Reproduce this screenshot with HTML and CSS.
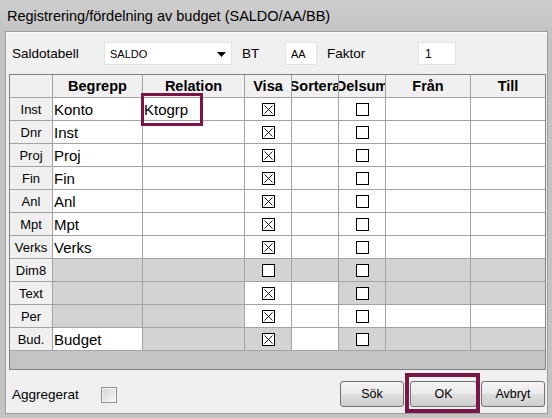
FILE: index.html
```html
<!DOCTYPE html>
<html>
<head>
<meta charset="utf-8">
<link rel="stylesheet" href="styles.css">
</head>
<body>
<div class="window">
  <div class="titlebar">Registrering/fördelning av budget (SALDO/AA/BB)</div>
  <div class="panel">
    <div class="toolbar">
      <span class="lbl lbl-saldo">Saldotabell</span>
      <div class="combo"><span>SALDO</span><svg class="arrow" width="9" height="5" viewBox="0 0 9 5"><path d="M0 0H9L4.5 5Z" fill="#000"/></svg></div>
      <span class="lbl lbl-bt">BT</span>
      <div class="field field-aa">AA</div>
      <span class="lbl lbl-faktor">Faktor</span>
      <div class="field field-1">1</div>
    </div>

    <div class="grid">
      <div class="hd"></div>
      <div class="hd"><span>Begrepp</span></div>
      <div class="hd"><span>Relation</span></div>
      <div class="hd"><span>Visa</span></div>
      <div class="hd"><span>Sortera</span></div>
      <div class="hd"><span>Delsum</span></div>
      <div class="hd"><span>Från</span></div>
      <div class="hd"><span>Till</span></div>

      <div class="rh">Inst</div><div class="c txt">Konto</div><div class="c txt">Ktogrp</div><div class="c ck"><svg class="cb" width="13" height="13" viewBox="0 0 13 13"><rect x=".5" y=".5" width="12" height="12" fill="#fff" stroke="#000"/><path d="M2.5 2.5L10.5 10.5M10.5 2.5L2.5 10.5" stroke="#000" stroke-width=".9"/></svg></div><div class="c"></div><div class="c ck"><svg class="cb" width="13" height="13" viewBox="0 0 13 13"><rect x=".5" y=".5" width="12" height="12" fill="#fff" stroke="#000"/></svg></div><div class="c"></div><div class="c"></div>

      <div class="rh">Dnr</div><div class="c txt">Inst</div><div class="c txt"></div><div class="c ck"><svg class="cb" width="13" height="13" viewBox="0 0 13 13"><rect x=".5" y=".5" width="12" height="12" fill="#fff" stroke="#000"/><path d="M2.5 2.5L10.5 10.5M10.5 2.5L2.5 10.5" stroke="#000" stroke-width=".9"/></svg></div><div class="c"></div><div class="c ck"><svg class="cb" width="13" height="13" viewBox="0 0 13 13"><rect x=".5" y=".5" width="12" height="12" fill="#fff" stroke="#000"/></svg></div><div class="c"></div><div class="c"></div>

      <div class="rh">Proj</div><div class="c txt">Proj</div><div class="c txt"></div><div class="c ck"><svg class="cb" width="13" height="13" viewBox="0 0 13 13"><rect x=".5" y=".5" width="12" height="12" fill="#fff" stroke="#000"/><path d="M2.5 2.5L10.5 10.5M10.5 2.5L2.5 10.5" stroke="#000" stroke-width=".9"/></svg></div><div class="c"></div><div class="c ck"><svg class="cb" width="13" height="13" viewBox="0 0 13 13"><rect x=".5" y=".5" width="12" height="12" fill="#fff" stroke="#000"/></svg></div><div class="c"></div><div class="c"></div>

      <div class="rh">Fin</div><div class="c txt">Fin</div><div class="c txt"></div><div class="c ck"><svg class="cb" width="13" height="13" viewBox="0 0 13 13"><rect x=".5" y=".5" width="12" height="12" fill="#fff" stroke="#000"/><path d="M2.5 2.5L10.5 10.5M10.5 2.5L2.5 10.5" stroke="#000" stroke-width=".9"/></svg></div><div class="c"></div><div class="c ck"><svg class="cb" width="13" height="13" viewBox="0 0 13 13"><rect x=".5" y=".5" width="12" height="12" fill="#fff" stroke="#000"/></svg></div><div class="c"></div><div class="c"></div>

      <div class="rh">Anl</div><div class="c txt">Anl</div><div class="c txt"></div><div class="c ck"><svg class="cb" width="13" height="13" viewBox="0 0 13 13"><rect x=".5" y=".5" width="12" height="12" fill="#fff" stroke="#000"/><path d="M2.5 2.5L10.5 10.5M10.5 2.5L2.5 10.5" stroke="#000" stroke-width=".9"/></svg></div><div class="c"></div><div class="c ck"><svg class="cb" width="13" height="13" viewBox="0 0 13 13"><rect x=".5" y=".5" width="12" height="12" fill="#fff" stroke="#000"/></svg></div><div class="c"></div><div class="c"></div>

      <div class="rh">Mpt</div><div class="c txt">Mpt</div><div class="c txt"></div><div class="c ck"><svg class="cb" width="13" height="13" viewBox="0 0 13 13"><rect x=".5" y=".5" width="12" height="12" fill="#fff" stroke="#000"/><path d="M2.5 2.5L10.5 10.5M10.5 2.5L2.5 10.5" stroke="#000" stroke-width=".9"/></svg></div><div class="c"></div><div class="c ck"><svg class="cb" width="13" height="13" viewBox="0 0 13 13"><rect x=".5" y=".5" width="12" height="12" fill="#fff" stroke="#000"/></svg></div><div class="c"></div><div class="c"></div>

      <div class="rh">Verks</div><div class="c txt">Verks</div><div class="c txt"></div><div class="c ck"><svg class="cb" width="13" height="13" viewBox="0 0 13 13"><rect x=".5" y=".5" width="12" height="12" fill="#fff" stroke="#000"/><path d="M2.5 2.5L10.5 10.5M10.5 2.5L2.5 10.5" stroke="#000" stroke-width=".9"/></svg></div><div class="c"></div><div class="c ck"><svg class="cb" width="13" height="13" viewBox="0 0 13 13"><rect x=".5" y=".5" width="12" height="12" fill="#fff" stroke="#000"/></svg></div><div class="c"></div><div class="c"></div>

      <div class="rh">Dim8</div><div class="g"></div><div class="g"></div><div class="g ck"><svg class="cb" width="13" height="13" viewBox="0 0 13 13"><rect x=".5" y=".5" width="12" height="12" fill="#fff" stroke="#000"/></svg></div><div class="g"></div><div class="g ck"><svg class="cb" width="13" height="13" viewBox="0 0 13 13"><rect x=".5" y=".5" width="12" height="12" fill="#fff" stroke="#000"/></svg></div><div class="g"></div><div class="g"></div>

      <div class="rh">Text</div><div class="g"></div><div class="g"></div><div class="c ck"><svg class="cb" width="13" height="13" viewBox="0 0 13 13"><rect x=".5" y=".5" width="12" height="12" fill="#fff" stroke="#000"/><path d="M2.5 2.5L10.5 10.5M10.5 2.5L2.5 10.5" stroke="#000" stroke-width=".9"/></svg></div><div class="c"></div><div class="g ck"><svg class="cb" width="13" height="13" viewBox="0 0 13 13"><rect x=".5" y=".5" width="12" height="12" fill="#fff" stroke="#000"/></svg></div><div class="g"></div><div class="g"></div>

      <div class="rh">Per</div><div class="g"></div><div class="g"></div><div class="c ck"><svg class="cb" width="13" height="13" viewBox="0 0 13 13"><rect x=".5" y=".5" width="12" height="12" fill="#fff" stroke="#000"/><path d="M2.5 2.5L10.5 10.5M10.5 2.5L2.5 10.5" stroke="#000" stroke-width=".9"/></svg></div><div class="c"></div><div class="c ck"><svg class="cb" width="13" height="13" viewBox="0 0 13 13"><rect x=".5" y=".5" width="12" height="12" fill="#fff" stroke="#000"/></svg></div><div class="c"></div><div class="c"></div>

      <div class="rh">Bud.</div><div class="c txt">Budget</div><div class="g"></div><div class="g ck"><svg class="cb" width="13" height="13" viewBox="0 0 13 13"><rect x=".5" y=".5" width="12" height="12" fill="#fff" stroke="#000"/><path d="M2.5 2.5L10.5 10.5M10.5 2.5L2.5 10.5" stroke="#000" stroke-width=".9"/></svg></div><div class="c"></div><div class="g ck"><svg class="cb" width="13" height="13" viewBox="0 0 13 13"><rect x=".5" y=".5" width="12" height="12" fill="#fff" stroke="#000"/></svg></div><div class="g"></div><div class="g"></div>

      <div class="filler"></div>
    </div>

    <div class="bottom">
      <span class="lbl lbl-agg">Aggregerat</span>
      <span class="chk"></span>
      <div class="buttons">
        <button class="btn btn-sok">Sök</button>
        <button class="btn btn-ok">OK</button>
        <button class="btn btn-avbryt">Avbryt</button>
      </div>
    </div>
  </div>

  <div class="mark mark-relation"></div>
  <div class="mark mark-ok"></div>
</div>
</body>
</html>
```

FILE: styles.css
```css
html, body {
  margin: 0;
  padding: 0;
  background: #c4c4c4;
}

.window {
  position: relative;
  width: 552px;
  height: 418px;
  background: #c3c3c3;
  font-family: "Liberation Sans", Arial, sans-serif;
  color: #000;
  overflow: hidden;
}

.titlebar {
  height: 31px;
  line-height: 32px;
  padding-left: 7px;
  font-size: 14.5px;
  background: linear-gradient(#cecece, #c4c4c4);
  box-sizing: border-box;
}

.panel {
  margin-left: 5px;
  width: 543px;
  height: 383px;
  box-sizing: border-box;
  border: 1px solid #9d9d9d;
  box-shadow: inset 1px 1px 0 #fafafa;
  background: #f0f0f0;
}

/* top toolbar */
.toolbar {
  display: flex;
  align-items: center;
  height: 23px;
  margin-top: 10px;
  padding-left: 6px;
}

.lbl {
  font-size: 13.5px;
  white-space: nowrap;
}

.lbl-saldo { width: 92px; }
.lbl-bt { width: 43px; margin-left: 10px; }
.lbl-faktor { width: 91px; margin-left: 10px; }

.combo {
  width: 128px;
  height: 23px;
  box-sizing: border-box;
  border: 1px solid #e4e4e4;
  background: #fff;
  display: flex;
  align-items: center;
  justify-content: space-between;
  padding: 0 5px 0 5px;
  font-size: 11px;
}

.arrow { display: block; margin-top: 1px; }

.field {
  height: 23px;
  box-sizing: border-box;
  border: 1px solid #e4e4e4;
  background: #fff;
  display: flex;
  align-items: center;
  padding-left: 5px;
  font-size: 11px;
}

.field-aa { width: 32px; }
.field-1 { width: 38px; padding-left: 6px; font-size: 12px; }

/* data grid */
.grid {
  margin-top: 9px;
  margin-left: 3px;
  width: 537px;
  box-sizing: border-box;
  border: 1px solid #808080;
  background: #a3a3a3;
  display: grid;
  grid-template-columns: 42px 89px 101px 46px 46px 46px 84px 74px;
  grid-template-rows: repeat(12, 22px) 18px;
  gap: 1px;
}

.hd {
  background: #f0f0f0;
  font-weight: bold;
  font-size: 14.5px;
  display: flex;
  align-items: center;
  justify-content: center;
  overflow: hidden;
  white-space: nowrap;
}

.hd span { flex: none; }

.rh {
  background: #f0f0f0;
  font-size: 13px;
  display: flex;
  align-items: center;
  justify-content: center;
  white-space: nowrap;
  overflow: hidden;
}

.c { background: #fff; }
.g { background: #d3d3d3; }

.txt {
  font-size: 15px;
  display: flex;
  align-items: center;
  padding-left: 1px;
  white-space: nowrap;
  overflow: hidden;
}

.ck {
  display: flex;
  align-items: center;
  justify-content: center;
}

.cb { display: block; }

.filler {
  grid-column: 1 / -1;
  background: #c4c4c4;
}

/* bottom row */
.bottom {
  display: flex;
  align-items: center;
  height: 26px;
  margin-top: 11px;
  padding-left: 6px;
  padding-right: 2px;
}

.lbl-agg { width: 89px; }

.chk {
  width: 16px;
  height: 16px;
  box-sizing: border-box;
  border: 1px solid #8f8f8f;
  background: linear-gradient(135deg, #d4d4d4, #f7f7f7);
  box-shadow: inset 0 0 0 1px #f4f4f4;
  margin-top: 2px;
}

.buttons {
  margin-left: auto;
  display: flex;
  align-items: center;
}

.btn {
  height: 26px;
  box-sizing: border-box;
  border: 1px solid #707070;
  border-radius: 3px;
  background: linear-gradient(#f4f4f4 0%, #ebebeb 48%, #dddddd 52%, #cfcfcf 100%);
  font-family: "Liberation Sans", Arial, sans-serif;
  font-size: 12.5px;
  color: #000;
  padding: 0;
  margin: 0;
}

.btn-sok { width: 64px; }
.btn-ok { width: 67px; margin-left: 6px; }
.btn-avbryt { width: 64px; margin-left: 4px; }

/* annotation marks overlaid on the screenshot */
.mark {
  position: absolute;
  box-sizing: border-box;
  border-style: solid;
  border-color: #7a1646;
}

.mark-relation {
  left: 141px;
  top: 93px;
  width: 62px;
  height: 33px;
  border-width: 3px;
}

.mark-ok {
  left: 405px;
  top: 373px;
  width: 75px;
  height: 40px;
  border-width: 4px;
}
```
